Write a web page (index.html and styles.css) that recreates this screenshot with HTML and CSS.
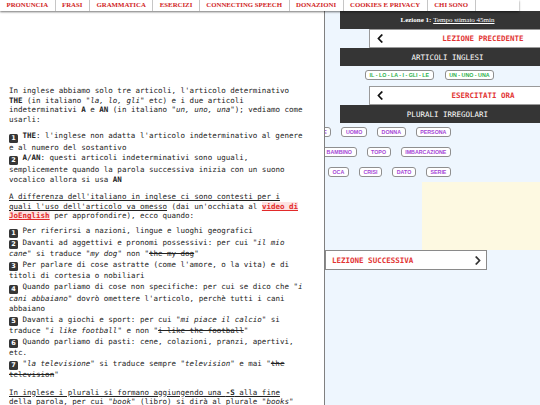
FILE: index.html
```html
<!DOCTYPE html>
<html lang="it">
<head>
<meta charset="utf-8">
<title>Articoli inglesi</title>
<link rel="stylesheet" href="styles.css">
</head>
<body>
<nav class="topnav">
  <ul class="menu">
    <li><a href="#">Pronuncia</a></li>
    <li><a href="#">Frasi</a></li>
    <li><a href="#">Grammatica</a></li>
    <li><a href="#">Esercizi</a></li>
    <li><a href="#">Connecting speech</a></li>
    <li><a href="#">Donazioni</a></li>
    <li><a href="#">Cookies e privacy</a></li>
    <li><a href="#">Chi sono</a></li>
    <li class="blank"></li>
  </ul>
</nav>
<div class="page">
  <main class="content">
    <p class="para">In inglese abbiamo solo tre articoli, l'articolo determinativo <b>THE</b> (in italiano "<i>la, lo, gli</i>" etc) e i due articoli indeterminativi <b>A</b> e <b>AN</b> (in italiano "<i>un, uno, una</i>"); vediamo come usarli:</p>
    <div class="steps">
      <div class="step"><span class="num">1</span><b>THE</b>: l'inglese non adatta l'articolo indeterminativo al genere e al numero del sostantivo</div>
      <div class="step"><span class="num">2</span><b>A/AN</b>: questi articoli indeterminativi sono uguali, semplicemente quando la parola successiva inizia con un suono vocalico allora si usa <b>AN</b></div>
    </div>
    <p class="para para-tight"><u>A differenza dell'italiano in inglese ci sono contesti per i quali l'uso dell'articolo va omesso</u> (dai un'occhiata al <a class="video" href="#">video di JoEnglish</a> per approfondire), ecco quando:</p>
    <div class="steps">
      <div class="step"><span class="num">1</span>Per riferirsi a nazioni, lingue e luoghi geografici</div>
      <div class="step"><span class="num">2</span>Davanti ad aggettivi e pronomi possessivi: per cui "<i>il mio cane</i>" si traduce "<i>my dog</i>" non "<s>the my dog</s>"</div>
      <div class="step"><span class="num">3</span>Per parlare di cose astratte (come l'amore, o la vita) e di titoli di cortesia o nobiliari</div>
      <div class="step"><span class="num">4</span>Quando parliamo di cose non specifiche: per cui se dico che "<i>i cani abbaiano</i>" dovrò omettere l'articolo, perchè tutti i cani abbaiano</div>
      <div class="step"><span class="num">5</span>Davanti a giochi e sport: per cui "<i>mi piace il calcio</i>" si traduce "<i>i like football</i>" e non "<s>i like the football</s>"</div>
      <div class="step"><span class="num">6</span>Quando parliamo di pasti: cene, colazioni, pranzi, apertivi, etc.</div>
      <div class="step"><span class="num">7</span>"<i>la televisione</i>" si traduce sempre "<i>television</i>" e mai "<s>the television</s>"</div>
    </div>
    <p class="para"><u>In inglese i plurali si formano aggiungendo una <b>-S</b> alla fine della parola</u>, per cui "<i>book</i>" (libro) si dirà al plurale "<i>books</i>" (libri); fai però attenzione alle seguenti <i>eccezioni</i>:</p>
  </main>
  <aside class="sidebar">
    <div class="bar lesson-bar"><b>Lezione 1:</b>&nbsp;<a href="#">Tempo stimato 45min</a></div>
    <a class="nav-btn" href="#">
      <span class="arrow"><svg width="6" height="9" viewBox="0 0 6 9"><path d="M4.5 0 L6 1 L2.5 4.5 L6 8 L4.5 9 L0.3 4.5 Z" fill="#111"/></svg></span>
      <span class="label">LEZIONE PRECEDENTE</span>
    </a>
    <div class="bar section-bar">ARTICOLI INGLESI</div>
    <div class="pill-row">
      <span class="pill green">IL - LO - LA - I - GLI - LE</span>
      <span class="pill green">UN - UNO - UNA</span>
    </div>
    <a class="nav-btn" href="#">
      <span class="arrow"><svg width="6" height="9" viewBox="0 0 6 9"><path d="M4.5 0 L6 1 L2.5 4.5 L6 8 L4.5 9 L0.3 4.5 Z" fill="#111"/></svg></span>
      <span class="label">ESERCITATI ORA</span>
    </a>
    <div class="bar section-bar">PLURALI IRREGOLARI</div>
    <div class="plural-rows">
      <div class="row">
        <span class="pill purple">PIEDE</span>
        <span class="pill purple">UOMO</span>
        <span class="pill purple">DONNA</span>
        <span class="pill purple">PERSONA</span>
      </div>
      <div class="row">
        <span class="pill purple">BAMBINO</span>
        <span class="pill purple">TOPO</span>
        <span class="pill purple">IMBARCAZIONE</span>
      </div>
      <div class="row">
        <span class="pill purple">OCA</span>
        <span class="pill purple">CRISI</span>
        <span class="pill purple">DATO</span>
        <span class="pill purple">SERIE</span>
      </div>
    </div>
    <div class="note"></div>
    <a class="next-btn" href="#">
      <span class="label">LEZIONE SUCCESSIVA</span>
      <svg width="6" height="9" viewBox="0 0 6 9"><path d="M1.5 0 L0 1 L3.5 4.5 L0 8 L1.5 9 L5.7 4.5 Z" fill="#333"/></svg>
    </a>
  </aside>
</div>
</body>
</html>
```
FILE: styles.css
```css
* { box-sizing: border-box; }
html, body { margin: 0; padding: 0; }
body {
  width: 540px;
  height: 405px;
  overflow: hidden;
  background: #fff;
  color: #222;
  font-family: "DejaVu Sans Mono", monospace;
}

/* top navigation */
.topnav {
  position: relative;
  z-index: 2;
  height: 11px;
  background: #fff;
}
.menu {
  list-style: none;
  margin: 0;
  padding: 0;
  display: flex;
  width: max-content;
  height: 11px;
  background: #fff;
  box-shadow: 0 1px 2px rgba(0, 0, 0, 0.55);
}
.menu li {
  padding: 0 6.5px;
  border-right: 1px solid #c6c6c6;
}
.menu a {
  display: block;
  font: bold 6.8px/10px "Liberation Serif", serif;
  color: #d02424;
  text-decoration: none;
  text-transform: uppercase;
}
.menu .blank {
  width: 43px;
  border-right: none;
}

/* page layout */
.page {
  display: flex;
  width: 540px;
  overflow: hidden;
}
.content {
  flex: none;
  width: 324px;
  padding: 75px 19px 0 9px;
  font-size: 7.5px;
}
.para {
  margin: 0 0 7px;
  line-height: 9.5px;
}
.para-tight { margin-bottom: 5.5px; }
.steps {
  margin: 0 0 6.6px;
  line-height: 10.6px;
}
.num {
  display: inline-block;
  width: 9px;
  height: 9px;
  margin-right: 4.5px;
  border-radius: 1.5px;
  background: #363636;
  color: #fff;
  font: bold 6.5px/9px "DejaVu Sans", sans-serif;
  text-align: center;
  vertical-align: -1.5px;
}
.video {
  color: #e22a2a;
  font-weight: bold;
  text-decoration: underline;
  background: #fde2e2;
}

/* sidebar */
.sidebar {
  flex: none;
  width: 247px;
  min-height: 394px;
  border-left: 1px solid #808080;
  background: #eef6fe;
  overflow: hidden;
}
.bar {
  display: flex;
  align-items: center;
  justify-content: center;
  margin: 0 16px 0 15px;
  height: 18px;
  background: #353535;
  color: #fff;
}
.lesson-bar {
  font: 7px "Liberation Serif", serif;
}
.lesson-bar a { color: #fff; text-decoration: underline; }
.section-bar {
  font: 7.5px "DejaVu Sans Mono", monospace;
}
.nav-btn {
  display: flex;
  align-items: center;
  height: 19px;
  margin-left: 44px;
  background: #fff;
  border: 1px solid #9a9a9a;
  border-right: none;
  text-decoration: none;
}
.nav-btn .arrow {
  display: flex;
  width: 25px;
  padding-left: 7px;
}
.nav-btn .label {
  flex: 1;
  text-align: center;
  color: #e23434;
  font: bold 7.5px "DejaVu Sans Mono", monospace;
}
.pill-row {
  display: flex;
  gap: 11px;
  margin: 4px 0 6px 40px;
}
.pill {
  flex: none;
  height: 10px;
  padding: 0 3.6px;
  border: 1px solid #8f8f8f;
  border-radius: 3px;
  background: #fff;
  font: bold 5.3px/8px "Liberation Sans", Arial, sans-serif;
}
.green { color: #2bb24c; }
.purple { color: #a445d6; }
.plural-rows {
  display: flex;
  flex-direction: column;
  gap: 10px;
  width: 126px;
  margin-top: 4px;
}
.plural-rows .row {
  display: flex;
  justify-content: flex-end;
  gap: 10px;
}
.note {
  height: 68px;
  margin: 5px 0 0 97px;
  background: #fdf9e1;
}
.next-btn {
  display: flex;
  align-items: center;
  justify-content: space-between;
  width: 162px;
  height: 20px;
  padding: 0 5px 0 6px;
  background: #fff;
  border: 1px solid #8a8a8a;
  text-decoration: none;
}
.next-btn .label {
  color: #e23434;
  font: bold 7.5px "DejaVu Sans Mono", monospace;
}
```
